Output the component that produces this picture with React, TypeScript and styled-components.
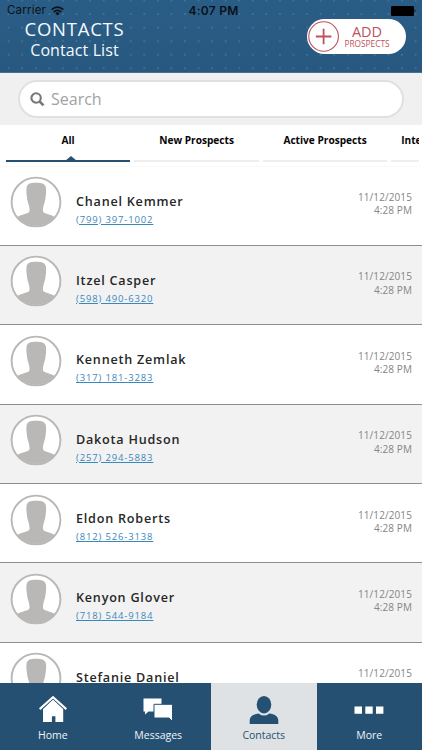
import React from "react";
import styled, { createGlobalStyle } from "styled-components";

const navy = "#265072";

const GlobalStyle = createGlobalStyle`
  * { box-sizing: border-box; }
  html, body { margin: 0; padding: 0; overflow: hidden; background: #fff; }
  body { font-family: "Open Sans", "Noto Sans", sans-serif; }
`;

const Screen = styled.div`
  width: 422px;
  height: 750px;
  display: flex;
  flex-direction: column;
  overflow: hidden;
  background: #fff;
`;

const Header = styled.header`
  flex: none;
  height: 73px;
  border-bottom: 1px solid #47718f;
  background:
    radial-gradient(circle at 50% 50%, rgba(116, 160, 190, 0.6) 0, rgba(116, 160, 190, 0) 1.3px) 1.9px -6.3px / 13.57px 13.57px,
    linear-gradient(#2a5d86, #28587f);
`;

const StatusBar = styled.div`
  height: 21px;
  padding: 0 5px 0 7px;
  display: grid;
  grid-template-columns: 1fr auto 1fr;
  align-items: center;
  color: #0a1017;
  font: 11.5px/21px Inter, sans-serif;
`;

const Carrier = styled.div`
  display: flex;
  align-items: center;
  gap: 5px;
  letter-spacing: 0.2px;
`;

const Clock = styled.div`
  padding-left: 3px;
  font-size: 12px;
  font-weight: 600;
  letter-spacing: 0.25px;
`;

const Battery = styled.svg`
  justify-self: end;
`;

const TitleBar = styled.div`
  height: 51px;
  padding: 0 16px 0 22px;
  display: flex;
  justify-content: space-between;
  align-items: flex-start;
`;

const Titles = styled.div`
  width: 105px;
  margin-top: -4px;
  color: #f4f9fd;
  text-align: center;
  white-space: nowrap;
`;

const Title = styled.h1`
  margin: 0;
  font-size: 18.5px;
  font-weight: 400;
  line-height: 23px;
  letter-spacing: 0.75px;
`;

const Subtitle = styled.div`
  font-size: 16px;
  line-height: 21px;
  letter-spacing: 0.1px;
`;

const AddButton = styled.button`
  width: 99px;
  height: 35px;
  margin: -2px 0 0;
  padding: 0 0 0 1px;
  border: 0;
  border-radius: 18px;
  background: #fff;
  color: #bd525d;
  display: flex;
  align-items: center;
  gap: 5px;
  font-family: inherit;
`;

const AddText = styled.span`
  width: 46px;
  display: flex;
  flex-direction: column;
  align-items: center;
`;

const AddMain = styled.span`
  font-size: 14.5px;
  line-height: 14px;
`;

const AddSub = styled.span`
  font-size: 8.3px;
  line-height: 10px;
`;

const SearchArea = styled.div`
  flex: none;
  height: 52px;
  padding: 7px 18px 0;
  background: #f0f0f0;
`;

const SearchField = styled.div`
  height: 38px;
  border: 2px solid #e0e0e0;
  border-radius: 19px;
  background: #fff;
  padding-left: 10px;
  display: flex;
  align-items: center;
  gap: 6px;
  color: #a2a2a2;
  font-size: 16px;
`;

const Tabs = styled.nav`
  flex: none;
  height: 41.5px;
  padding: 0 3px 0 6px;
  border-bottom: 1px solid #fafafa;
`;

const TabScroller = styled.div`
  display: flex;
  gap: 4.3px;
  overflow: hidden;
`;

const Tab = styled.div<{ $active?: boolean }>`
  flex: none;
  width: 124.2px;
  height: 37px;
  border-bottom: 2px solid ${(p) => (p.$active ? navy : "#eeeeee")};
  display: flex;
  flex-direction: column;
  align-items: center;
  justify-content: space-between;
  color: #050505;
  font-size: 10.15px;
  font-weight: 700;
  line-height: 31px;
  white-space: nowrap;
`;

const Pointer = styled.svg`
  margin-left: 6px;
  flex: none;
`;

const List = styled.main`
  flex: 1;
  min-height: 0;
  overflow: hidden;
`;

const Row = styled.article`
  height: 79.4px;
  border-bottom: 1px solid #8e8e8e;
  padding: 0 10px;
  display: flex;
  align-items: flex-start;
  background: #fff;
  &:nth-child(even) { background: #f2f2f2; }
`;

const Portrait = styled.svg`
  flex: none;
  margin-top: 8.5px;
`;

const Person = styled.div`
  flex: 1;
  padding: 25px 0 0 14px;
`;

const Name = styled.div`
  color: #272727;
  font-size: 12.6px;
  font-weight: 600;
  line-height: 19px;
  letter-spacing: 0.78px;
`;

const Phone = styled.a`
  display: block;
  width: max-content;
  color: #3b88bd;
  font-size: 9.5px;
  line-height: 18.6px;
  letter-spacing: 0.85px;
  text-decoration: underline;
  text-underline-offset: 1px;
  text-decoration-thickness: 1px;
`;

const Stamp = styled.div`
  padding-top: 24.6px;
  color: #858585;
  font-size: 10px;
  line-height: 13.3px;
  letter-spacing: 0.1px;
  text-align: right;
`;

const BottomBar = styled.footer`
  flex: none;
  height: 66.7px;
  display: grid;
  grid-template-columns: repeat(4, 1fr);
  background: ${navy};
`;

const BarItem = styled.div<{ $active?: boolean }>`
  padding-top: 12.7px;
  display: flex;
  flex-direction: column;
  align-items: center;
  background: ${(p) => (p.$active ? "#dee2e5" : navy)};
  color: ${(p) => (p.$active ? navy : "#eef4f9")};
  font-size: 10.5px;
  line-height: 16px;
  svg { margin-bottom: 3px; }
`;

const names: [string, string][] = [
  ["Chanel Kemmer", "(799) 397-1002"],
  ["Itzel Casper", "(598) 490-6320"],
  ["Kenneth Zemlak", "(317) 181-3283"],
  ["Dakota Hudson", "(257) 294-5883"],
  ["Eldon Roberts", "(812) 526-3138"],
  ["Kenyon Glover", "(718) 544-9184"],
  ["Stefanie Daniel", ""],
];

const Avatar = () => (
  <Portrait width="52" height="54" viewBox="0 0 52 54">
    <circle cx="26" cy="27" r="24.6" fill="#fff" />
    <path
      d="M7 42C11.5 39.2 18.8 38.6 19.4 36.4C19.8 34.5 19.4 32.5 18.6 29.5C17.6 26.5 17.2 24.5 16.8 21C16.3 18 16.3 15.5 16.5 13C17 9 20 7.8 26 7.8S35.4 9 36 13C36.2 15.5 36.2 18 35.7 21C35.3 24.5 34.9 26.5 33.9 29.5C33.1 32.5 32.7 34.5 33.1 36.4C33.7 38.6 40.5 39.2 45 42A24.6 24.6 0 0 1 7 42Z"
      fill="#b9b8b7"
    />
    <circle cx="26" cy="27" r="24.4" fill="none" stroke="#b9b8b7" strokeWidth="1.9" />
  </Portrait>
);

const WifiIcon = () => (
  <svg width="13" height="10" viewBox="0 0 13 10" fill="none" stroke="#0a1017" strokeWidth="1.7">
    <path d="M.7 3.7Q6.5-1.5 12.3 3.7M2.8 6Q6.5 2.7 10.2 6" />
    <path d="M4.3 7.2Q6.5 5.3 8.7 7.2L6.5 9.5Z" fill="#0a1017" stroke="none" />
  </svg>
);

const HomeIcon = () => (
  <svg width="28" height="28" viewBox="0 0 28 28">
    <path d="M14 3.6L24.2 12.9V26H16.4V20.3H12.9V26H4V12.9Z" fill="#fff" />
    <path d="M.7 13.1L14 1.2L27.3 13.1" fill="none" stroke="#fff" strokeWidth="2.1" />
    <path d="M3 13.1L14 3.2L25 13.1" fill="none" stroke={navy} strokeWidth=".4" />
  </svg>
);

const MessagesIcon = () => (
  <svg width="30" height="28" viewBox="0 0 30 28">
    <path d="M.5 2.5H18.5V15.5H5.5L2 18.5V15.5H.5Z" fill="#fff" />
    <path d="M11 8.3H29.5V25.5L26 22H11Z" fill="#fff" stroke={navy} strokeWidth="1" />
  </svg>
);

const ContactIcon = () => (
  <svg width="30" height="28" viewBox="0 0 30 28" fill={navy}>
    <ellipse cx="15" cy="8.7" rx="7.3" ry="8.7" />
    <path d="M.7 28V24.8C.7 20 4.5 18 9.7 17.4Q15 21.8 20.3 17.4C25.5 18 29.3 20 29.3 24.8V28Z" />
  </svg>
);

const MoreIcon = () => (
  <svg width="30" height="28" viewBox="0 0 30 28" fill="#fff">
    <path d="M.5 10.5H8V17.8H.5ZM11.3 10.5H18.7V17.8H11.3ZM22 10.5H29.4V17.8H22Z" />
  </svg>
);

export default function App() {
  return (
    <>
      <GlobalStyle />
      <Screen>
        <Header>
          <StatusBar>
            <Carrier>Carrier <WifiIcon /></Carrier>
            <Clock>4:07 PM</Clock>
            <Battery width="26" height="10" viewBox="0 0 26 10">
              <rect width="23" height="10" rx="1.3" />
              <path d="M23.7 3Q25.5 4.8 23.7 6.8Z" />
            </Battery>
          </StatusBar>
          <TitleBar>
            <Titles>
              <Title>CONTACTS</Title>
              <Subtitle>Contact List</Subtitle>
            </Titles>
            <AddButton>
              <svg width="31" height="33" viewBox="0 0 31 33" fill="none" stroke="#bd525d">
                <circle cx="15.6" cy="16.5" r="14.8" strokeWidth="1.1" />
                <path d="M15.6 8.7V24.3M7.8 16.5H23.4" strokeWidth="1.8" />
              </svg>
              <AddText>
                <AddMain>ADD</AddMain>
                <AddSub>PROSPECTS</AddSub>
              </AddText>
            </AddButton>
          </TitleBar>
        </Header>
        <SearchArea>
          <SearchField>
            <svg width="15" height="15" viewBox="0 0 15 15" fill="none" stroke="#777" strokeWidth="2.1">
              <circle cx="6.1" cy="6" r="4.7" />
              <path d="M9.5 9.4L13.5 13.4" strokeWidth="2.6" />
            </svg>
            <span>Search</span>
          </SearchField>
        </SearchArea>
        <Tabs>
          <TabScroller>
            <Tab $active>
              <span>All</span>
              <Pointer width="12" height="5" viewBox="0 0 12 5"><path d="M0 5L6 0L12 5Z" fill={navy} /></Pointer>
            </Tab>
            <Tab>New Prospects</Tab>
            <Tab>Active Prospects</Tab>
            <Tab>Interested Prospects</Tab>
          </TabScroller>
        </Tabs>
        <List>
          {names.map(([name, phone]) => (
            <Row key={name}>
              <Avatar />
              <Person>
                <Name>{name}</Name>
                {phone && <Phone>{phone}</Phone>}
              </Person>
              <Stamp>11/12/2015{phone && <><br />4:28 PM</>}</Stamp>
            </Row>
          ))}
        </List>
        <BottomBar>
          <BarItem><HomeIcon />Home</BarItem>
          <BarItem><MessagesIcon />Messages</BarItem>
          <BarItem $active><ContactIcon />Contacts</BarItem>
          <BarItem><MoreIcon />More</BarItem>
        </BottomBar>
      </Screen>
    </>
  );
}
